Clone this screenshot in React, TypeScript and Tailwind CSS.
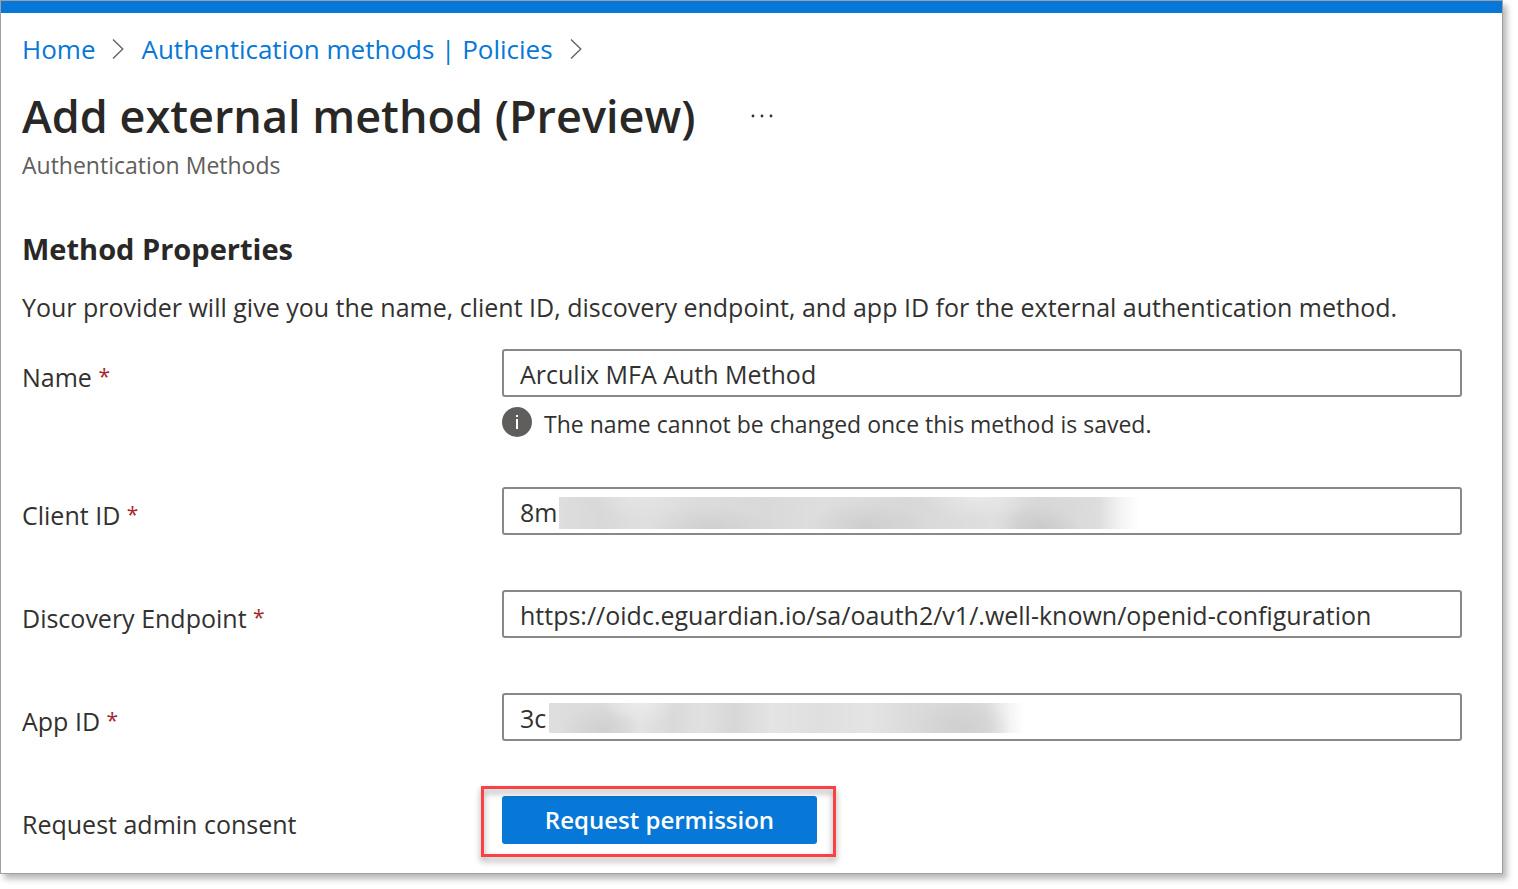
import React from 'react';

function Chevron() {
  return (
    <svg width="12" height="22" viewBox="0 0 12 22" fill="none" stroke="#605e5c" strokeWidth="1.3" aria-hidden="true">
      <path d="M1 1.5 10.8 11 1 20.5" />
    </svg>
  );
}

function Label({ htmlFor, text, required }: { htmlFor: string; text: string; required?: boolean }) {
  return (
    <label htmlFor={htmlFor} className="w-[480px] shrink-0 pt-2.5 text-[25px] leading-9">
      {text}
      {required && (
        <>
          {' '}
          <span className="align-[3px] text-[21px] leading-none text-[#a4262c]">*</span>
        </>
      )}
    </label>
  );
}

type FieldProps = {
  id: string;
  label: string;
  value: string;
  mask?: string;
  children?: React.ReactNode;
};

function Field({ id, label, value, mask, children }: FieldProps) {
  return (
    <div className="flex items-start">
      <Label htmlFor={id} text={label} required />
      <div className="min-w-0 flex-1">
        <div className="relative">
          <input
            id={id}
            required
            defaultValue={value}
            className="block h-12 w-full rounded-[3px] border-2 border-[#8a8886] bg-white px-4 pt-0.5 text-[25px] leading-9 outline-none"
          />
          {mask && <div className={mask} aria-hidden="true" />}
        </div>
        {children}
      </div>
    </div>
  );
}

const clientMask =
  'absolute top-2.5 left-[57px] h-8 w-[580px] bg-[radial-gradient(60px_24px_at_26%_100%,#cfcfcf,transparent),radial-gradient(60px_24px_at_53%_90%,#cecece,transparent),radial-gradient(40px_24px_at_83%_100%,#cacaca,transparent),radial-gradient(50px_22px_at_14%_0%,#e4e4e4,transparent),radial-gradient(60px_22px_at_73%_0%,#e8e8e8,transparent),linear-gradient(90deg,#dedede_0%,#d8d8d8_7%,#dfdfdf_14%,#dbdbdb_27%,#d9d9d9_36%,#dedede_45%,#d8d8d8_60%,#dfdfdf_75%,#d6d6d6_80%,#dadada_89%,#dddddd_93%,#f4f4f4_97%,#ffffff_100%)]';
const appMask =
  'absolute top-2.5 left-[47px] h-[30px] w-[475px] bg-[radial-gradient(40px_24px_at_11%_90%,#d0d0d0,transparent),radial-gradient(40px_22px_at_19%_0%,#eaeaea,transparent),radial-gradient(50px_24px_at_87%_80%,#d0d0d0,transparent),linear-gradient(90deg,#dedede_0%,#dadada_12%,#e3e3e3_19%,#d9d9d9_26%,#e1e1e1_32%,#d7d7d7_39%,#e4e4e4_47%,#dfdfdf_57%,#e4e4e4_67%,#dbdbdb_76%,#d6d6d6_87%,#dadada_92%,#f4f4f4_97%,#ffffff_100%)]';

export default function App() {
  return (
    <div className="bg-white pr-[15px] pb-[15px] font-['Open_Sans','Noto_Sans',sans-serif] text-[#323130]">
      <main className="border border-[#a0a0a0] shadow-[4px_5px_6px_rgba(0,0,0,0.28)]">
        <div className="h-3 bg-[#0778d7]" />
        <div className="pt-4 pr-10 pb-[29px] pl-[21px]">
          <nav aria-label="Breadcrumb" className="flex items-center gap-[17px] text-[26px] leading-10 text-[#0778d7]">
            <a href="#home">Home</a>
            <Chevron />
            <a href="#policies">Authentication methods | Policies</a>
            <Chevron />
          </nav>
          <header className="pt-4">
            <div className="flex items-center gap-14">
              <h1 className="text-[45px] leading-[62px] font-semibold text-[#292827]">Add external method (Preview)</h1>
              <button type="button" aria-label="More options">
                <svg width="22" height="4" viewBox="0 0 22 4" fill="#323130">
                  <circle cx="2" cy="2" r="1.4" />
                  <circle cx="11" cy="2" r="1.4" />
                  <circle cx="20" cy="2" r="1.4" />
                </svg>
              </button>
            </div>
            <p className="text-[23px] leading-9 text-[#605e5c]">Authentication Methods</p>
          </header>
          <h2 className="pt-[46px] text-[29px] leading-10 font-bold text-[#292827]">Method Properties</h2>
          <p className="pt-[18px] text-[25px] leading-10">
            Your provider will give you the name, client ID, discovery endpoint, and app ID for the external authentication
            method.
          </p>
          <form className="flex flex-col gap-[55px] pt-[22px]" onSubmit={(e) => e.preventDefault()}>
            <Field id="name" label="Name" value="Arculix MFA Auth Method">
              <div className="-mb-[15px] flex h-[50px] items-center gap-3">
                <svg className="shrink-0" width="30" height="30" viewBox="0 0 30 30" aria-hidden="true">
                  <circle cx="15" cy="15" r="15" fill="#605e5c" />
                  <path d="M14 12h2v10h-2zM14 8h2v2h-2z" fill="#fff" />
                </svg>
                <p className="pt-1 text-[23px] leading-8">The name cannot be changed once this method is saved.</p>
              </div>
            </Field>
            <Field id="client-id" label="Client ID" value="8m" mask={clientMask} />
            <Field id="endpoint" label="Discovery Endpoint" value="https://oidc.eguardian.io/sa/oauth2/v1/.well-known/openid-configuration" />
            <Field id="app-id" label="App ID" value="3c" mask={appMask} />
            <div className="flex items-start">
              <Label htmlFor="consent" text="Request admin consent" />
              <div className="relative">
                <button
                  id="consent"
                  type="button"
                  className="block h-12 w-[315px] rounded-[3px] bg-[#0778d7] text-[24px] leading-9 font-semibold text-white"
                >
                  Request permission
                </button>
                <div className="pointer-events-none absolute -top-2.5 -right-[19px] -bottom-[13px] -left-[21px] border-3 border-[#fb4144] drop-shadow-[0_4px_3px_rgba(0,0,0,0.4)]" />
              </div>
            </div>
          </form>
        </div>
      </main>
    </div>
  );
}
